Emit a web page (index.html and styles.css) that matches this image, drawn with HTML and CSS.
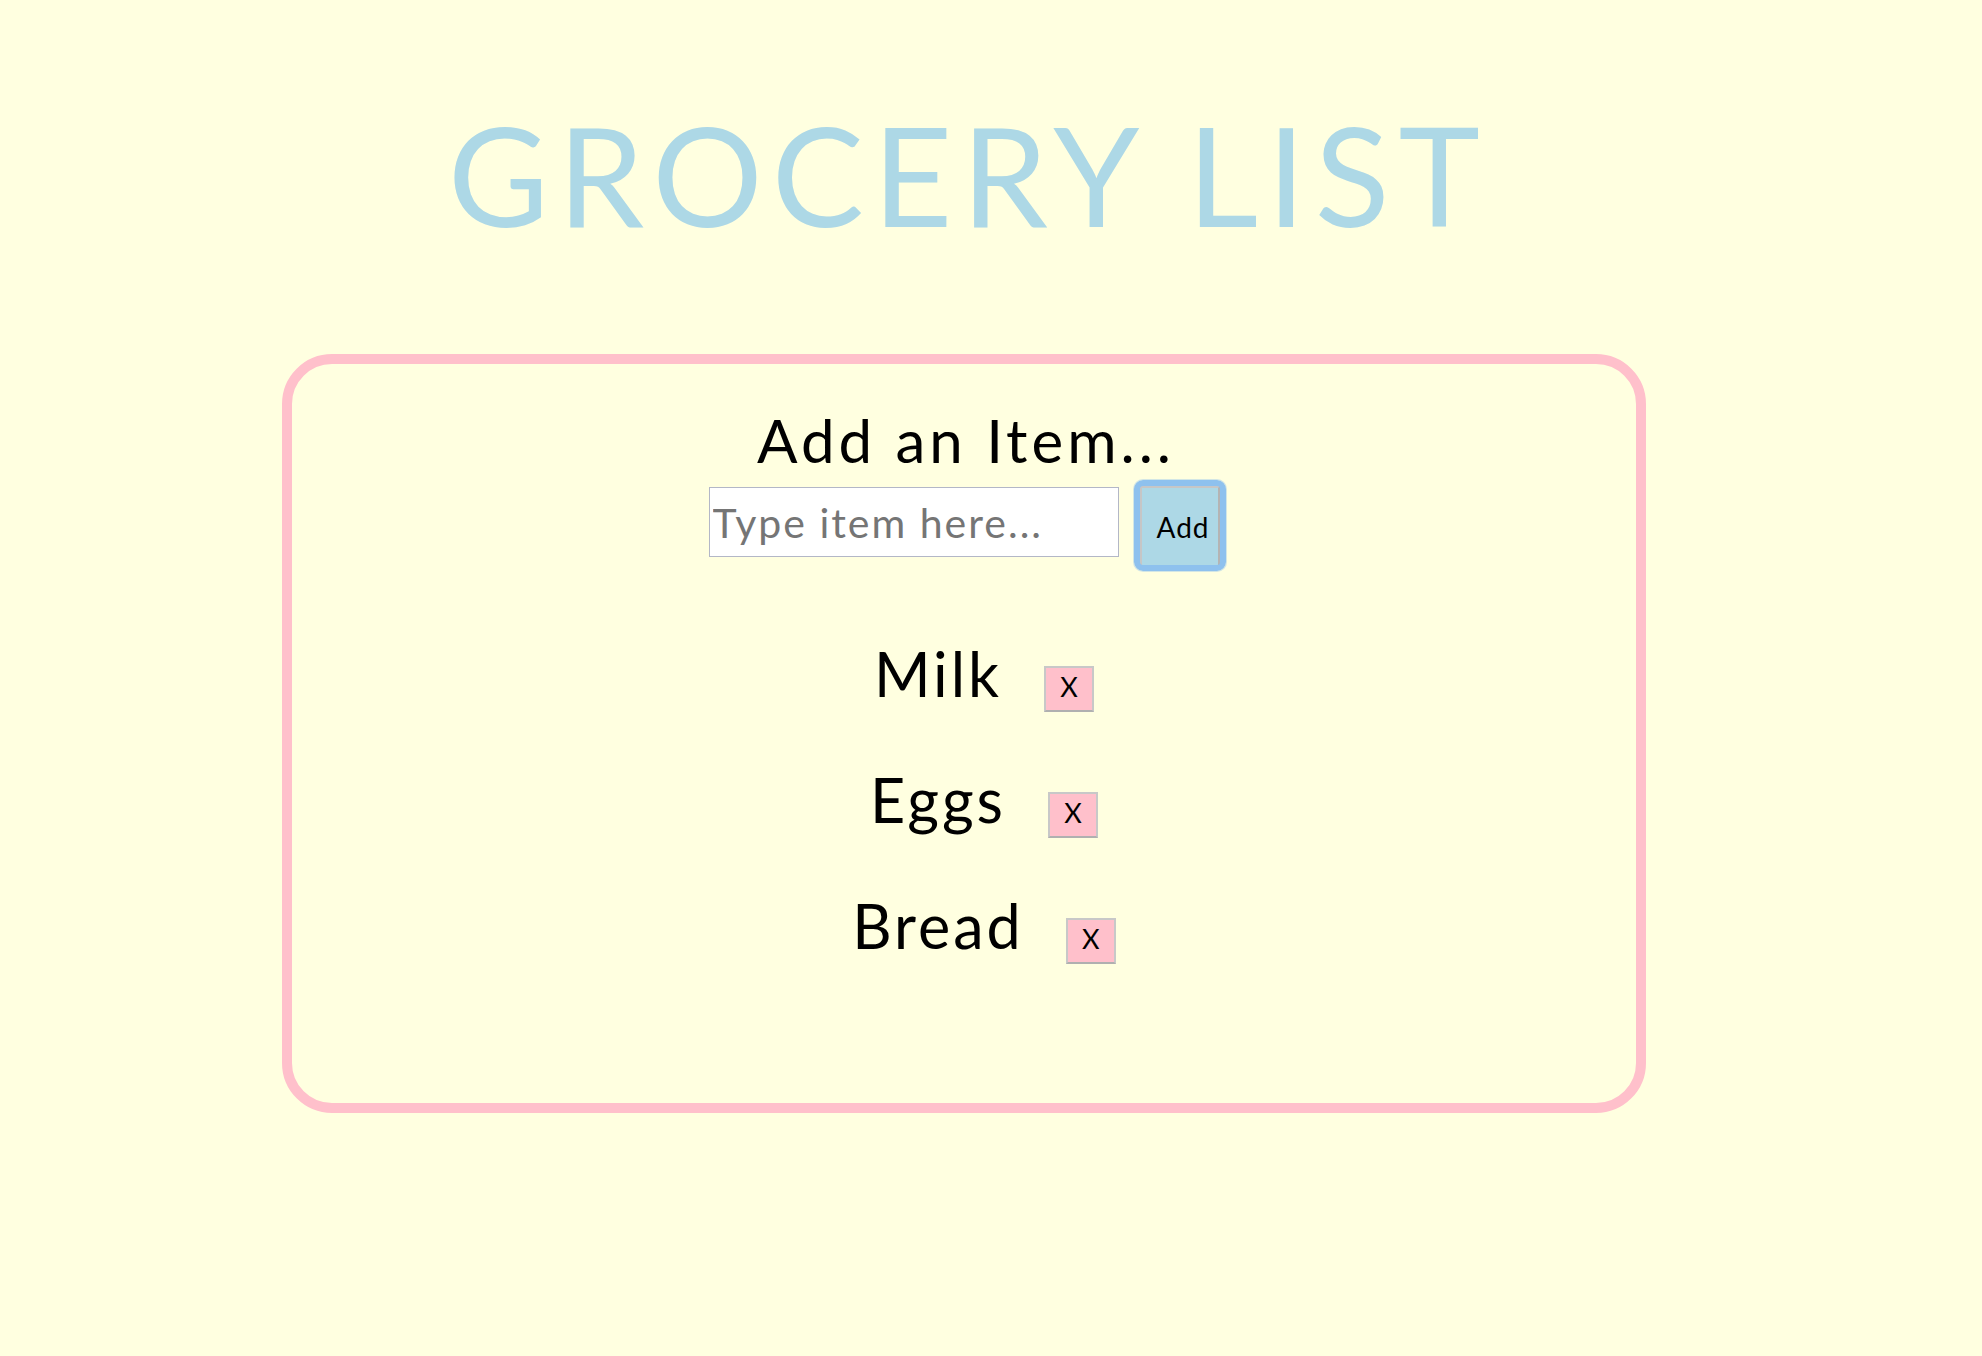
FILE: index.html
```html
<!DOCTYPE html>
<html lang="en">
<head>
<meta charset="utf-8">
<title>Grocery List</title>
<link rel="stylesheet" href="styles.css">
</head>
<body>
<div class="page">
  <h1 class="title">GROCERY LIST</h1>
  <section class="card">
    <h2 class="card-heading">Add an Item...</h2>
    <form class="add-form">
      <input class="item-input" type="text" placeholder="Type item here...">
      <button class="add-btn" type="button">Add</button>
    </form>
    <ul class="items">
      <li class="item"><span class="item-name">Milk</span><button class="remove-btn" type="button">X</button></li>
      <li class="item"><span class="item-name">Eggs</span><button class="remove-btn" type="button">X</button></li>
      <li class="item"><span class="item-name">Bread</span><button class="remove-btn" type="button">X</button></li>
    </ul>
  </section>
</div>
</body>
</html>
```
FILE: styles.css
```css
* { box-sizing: border-box; }
html, body { margin: 0; background: #ffffe0; }
body { font-family: "Lato", "Liberation Sans", sans-serif; color: #000; }

.page { width: 1928px; padding-top: 105px; }

.title {
  margin: 0 0 111px;
  padding-left: 9px;
  text-align: center;
  font-size: 138px;
  line-height: 138px;
  font-weight: 400;
  color: #add8e6;
  letter-spacing: 9px;
}

.card {
  width: 1364px;
  height: 759px;
  margin: 0 auto;
  border: 10px solid #ffc0cb;
  border-radius: 50px;
  padding-top: 40px;
}

.card-heading {
  margin: 0;
  padding-left: 4px;
  font-size: 60px;
  line-height: 72px;
  font-weight: 400;
  text-align: center;
  letter-spacing: 4px;
}

.add-form {
  display: flex;
  justify-content: center;
  align-items: flex-start;
  gap: 21px;
  margin: 10px 0 0;
}

.item-input {
  width: 410px;
  height: 70px;
  margin: 1px 0 0;
  border: 1px solid #b3b7c7;
  padding: 1px 3px;
  font-family: "Lato", sans-serif;
  font-size: 41px;
  letter-spacing: 2px;
  background: #fff;
  outline: none;
}
.item-input::placeholder { color: #757575; }

.add-btn {
  position: relative;
  width: 80px;
  height: 81px;
  padding: 0 0 0 7px;
  background: #add8e6;
  border: 2px solid #c6c6c6;
  border-bottom-color: #a9a9a9;
  border-right-color: #b4b4b4;
  font-family: "Lato", sans-serif;
  font-size: 28px;
  letter-spacing: 1px;
  color: #000;
}
.add-btn::after {
  content: "";
  position: absolute;
  top: -8px;
  left: -8px;
  right: -8px;
  bottom: -6px;
  border: 6px solid #8ec1ee;
  border-radius: 9px;
  box-shadow: 0 0 0 1px rgba(142, 193, 238, 0.4);
}

.items {
  list-style: none;
  margin: 44px 0 0;
  padding: 0 0 0 40px;
}

.item {
  display: flex;
  justify-content: center;
  align-items: baseline;
  gap: 42px;
  font-size: 61px;
  line-height: 126px;
  letter-spacing: 3px;
}

.remove-btn {
  width: 50px;
  height: 46px;
  padding: 0 0 4px;
  line-height: 38px;
  background: #ffc0cb;
  border: 2px solid #c8c8c8;
  border-bottom-color: #b0b0b0;
  font-family: "Lato", sans-serif;
  font-size: 27px;
  color: #000;
  letter-spacing: 0;
}
```
